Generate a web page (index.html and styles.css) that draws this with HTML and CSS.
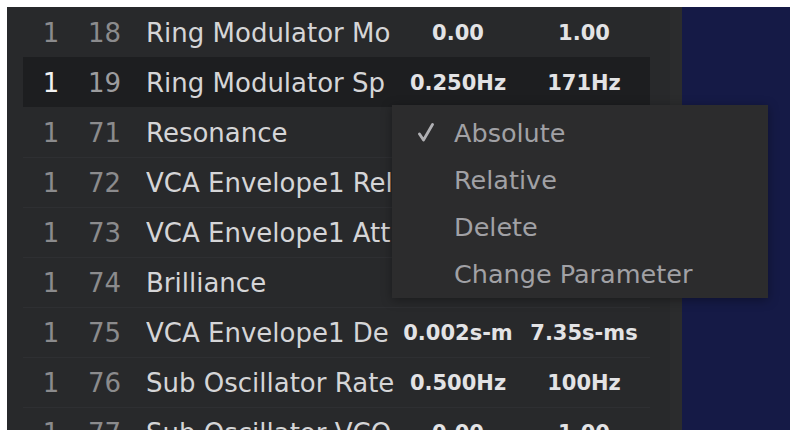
FILE: index.html
```html
<!DOCTYPE html>
<html lang="en">
<head>
  <meta charset="UTF-8">
  <title>MIDI Mapping</title>
  <link rel="stylesheet" href="styles.css">
</head>
<body>

<div class="window">
  <div class="mapping-list">
    <div class="row">
      <span class="ch">1</span><span class="cc">18</span><span class="name">Ring Modulator Mo</span><span class="val">0.00</span><span class="val">1.00</span>
    </div>
    <div class="row selected">
      <span class="ch">1</span><span class="cc">19</span><span class="name">Ring Modulator Sp</span><span class="val">0.250Hz</span><span class="val">171Hz</span>
    </div>
    <div class="row">
      <span class="ch">1</span><span class="cc">71</span><span class="name">Resonance</span><span class="val"></span><span class="val"></span>
    </div>
    <div class="row">
      <span class="ch">1</span><span class="cc">72</span><span class="name">VCA Envelope1 Rel</span><span class="val"></span><span class="val"></span>
    </div>
    <div class="row">
      <span class="ch">1</span><span class="cc">73</span><span class="name">VCA Envelope1 Att</span><span class="val"></span><span class="val"></span>
    </div>
    <div class="row">
      <span class="ch">1</span><span class="cc">74</span><span class="name">Brilliance</span><span class="val"></span><span class="val"></span>
    </div>
    <div class="row">
      <span class="ch">1</span><span class="cc">75</span><span class="name">VCA Envelope1 De</span><span class="val">0.002s-m</span><span class="val">7.35s-ms</span>
    </div>
    <div class="row">
      <span class="ch">1</span><span class="cc">76</span><span class="name">Sub Oscillator Rate</span><span class="val">0.500Hz</span><span class="val">100Hz</span>
    </div>
    <div class="row">
      <span class="ch">1</span><span class="cc">77</span><span class="name">Sub Oscillator VCO</span><span class="val">0.00</span><span class="val">1.00</span>
    </div>
  </div>
  <div class="side-panel"></div>

  <!-- context menu for the selected mapping -->
  <ul class="context-menu">
    <li class="checked">
      <svg class="check" width="16" height="19" viewBox="0 0 16 19">
        <path d="M1.5 11 L5.5 17 L14.5 1.5" fill="none" stroke="currentColor" stroke-width="2.8" stroke-linecap="round" stroke-linejoin="round"/>
      </svg>
      Absolute
    </li>
    <li>Relative</li>
    <li>Delete</li>
    <li>Change Parameter</li>
  </ul>
</div>

</body>
</html>
```

FILE: styles.css
```css
body {
  margin: 0;
  background: #fff;
  font-family: "DejaVu Sans", sans-serif;
}

.window {
  position: relative;
  display: flex;
  margin: 7px 3px 0 7px;
  height: 423px;
  overflow: hidden;
}

.mapping-list {
  flex: 0 0 675px;
  min-width: 0;
  background: #28292b;
  padding: 0 20px 0 16px;
  box-sizing: border-box;
  border-right: 12px solid #2b2c2d;
}

.side-panel {
  flex: 1;
  background: #151a46;
}

.row {
  display: grid;
  grid-template-columns: 56px 67px 252px 120px 132px;
  height: 50px;
  line-height: 50px;
  border-top: 1px solid #2e2f32;
  box-sizing: border-box;
}
.row:first-child { border-top-color: transparent; }
.row.selected { background: #1d1e20; border-top-color: #1d1e20; }
.row.selected + .row { border-top-color: transparent; }

.ch, .cc {
  font-size: 26px;
  color: #8b8b8d;
}
.ch { text-align: center; }
.cc { padding-left: 9px; }
.row.selected .ch { color: #f2f2f2; }
.row.selected .cc { color: #9c9c9e; }

.name {
  font-size: 26px;
  color: #d5d5d7;
  white-space: nowrap;
  overflow: hidden;
}

.val {
  font-size: 21px;
  font-weight: bold;
  color: #e3e3e5;
  text-align: center;
  white-space: nowrap;
}

.context-menu {
  position: absolute;
  left: 385px;
  top: 98px;
  width: 376px;
  margin: 0;
  padding: 5px 0 0;
  list-style: none;
  background: #2c2c2d;
  box-shadow: 0 2px 10px rgba(0, 0, 0, 0.35);
}
.context-menu li {
  position: relative;
  height: 47px;
  line-height: 47px;
  padding-left: 62px;
  font-size: 25.5px;
  color: #a1a1a5;
  white-space: nowrap;
}
.context-menu .check {
  position: absolute;
  left: 26px;
  top: 13px;
  color: #b0b0b3;
}
```
